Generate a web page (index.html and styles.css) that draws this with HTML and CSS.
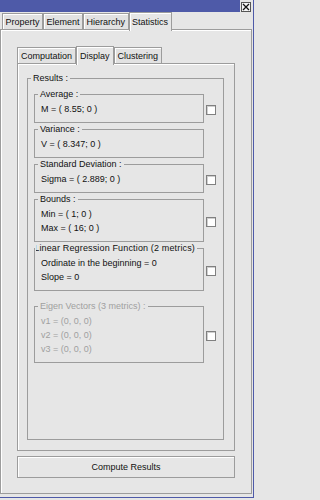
FILE: index.html
```html
<!DOCTYPE html>
<html>
<head>
<meta charset="utf-8">
<link rel="stylesheet" href="styles.css">
</head>
<body>
<div class="window">
  <div class="titlebar">
    <div class="title-fill"></div>
    <div class="close"><svg width="8" height="8" viewBox="0 0 8 8"><path d="M1 1L7 7M7 1L1 7" stroke="#111" stroke-width="1.3" fill="none"/></svg></div>
  </div>
  <div class="tabs top-tabs">
    <div class="tab">Property</div>
    <div class="tab">Element</div>
    <div class="tab">Hierarchy</div>
    <div class="tab tab-active">Statistics</div>
  </div>
  <div class="panel main-panel">
    <div class="tabs">
      <div class="tab">Computation</div>
      <div class="tab tab-active">Display</div>
      <div class="tab">Clustering</div>
    </div>
    <div class="panel inner-panel">
      <fieldset class="results">
        <legend>Results :</legend>
        <div class="results-body">
          <div class="row">
            <fieldset class="group"><legend>Average :</legend><div class="group-body">M = ( 8.55; 0 )</div></fieldset>
            <span class="check"></span>
          </div>
          <div class="row">
            <fieldset class="group"><legend>Variance :</legend><div class="group-body">V = ( 8.347; 0 )</div></fieldset>
          </div>
          <div class="row">
            <fieldset class="group"><legend>Standard Deviation :</legend><div class="group-body">Sigma = ( 2.889; 0 )</div></fieldset>
            <span class="check"></span>
          </div>
          <div class="row">
            <fieldset class="group"><legend>Bounds :</legend><div class="group-body">Min = ( 1; 0 )<br>Max = ( 16; 0 )</div></fieldset>
            <span class="check"></span>
          </div>
          <div class="row">
            <fieldset class="group"><legend class="legend-clipped"><span class="clip"><span class="clip-text">Linear Regression Function (2 metrics)</span></span></legend><div class="group-body">Ordinate in the beginning = 0<br>Slope = 0</div></fieldset>
            <span class="check"></span>
          </div>
          <div class="row row-gap">
            <fieldset class="group disabled"><legend>Eigen Vectors (3 metrics) :</legend><div class="group-body">v1 = (0, 0, 0)<br>v2 = (0, 0, 0)<br>v3 = (0, 0, 0)</div></fieldset>
            <span class="check"></span>
          </div>
        </div>
      </fieldset>
    </div>
    <button class="btn">Compute Results</button>
  </div>
</div>
</body>
</html>
```

FILE: styles.css
```css
html, body {
  margin: 0;
  padding: 0;
  background: #e6e6e6;
}
body {
  font-family: "Liberation Sans", Arial, sans-serif;
  font-size: 9px;
  color: #111;
  overflow: hidden;
}
.window {
  box-sizing: border-box;
  width: 254px;
  height: 498px;
  border-right: 1px solid #4e5aa8;
  border-bottom: 1px solid #4e5aa8;
  display: flex;
  flex-direction: column;
}
.titlebar {
  height: 12px;
  display: flex;
  flex: 0 0 12px;
}
.title-fill {
  width: 240px;
  background: #4e5aa8;
}
.close {
  box-sizing: border-box;
  width: 10px;
  height: 10px;
  margin: 2px 0 0 1px;
  border: 1px solid #555;
  background: #f4f4f4;
  display: flex;
  align-items: center;
  justify-content: center;
}
.close svg { display: block; }
.tabs {
  display: flex;
  align-items: flex-end;
  height: 17px;
  flex: 0 0 17px;
}
.top-tabs {
  padding-left: 2px;
}
.tab {
  box-sizing: border-box;
  height: 16px;
  padding: 1px 3px 0;
  line-height: 14px;
  border: 1px solid #9c9c9c;
  border-bottom: none;
  box-shadow: inset 1px 1px 0 #fff;
  background: #e2e2e2;
  white-space: nowrap;
}
.top-tabs .tab {
  padding-left: 2.5px;
  padding-right: 2.5px;
}
.tab-active {
  height: 19px;
  margin-bottom: -2px;
  padding-top: 2px;
  background: #e6e6e6;
  position: relative;
  z-index: 1;
}
.panel {
  box-sizing: border-box;
  border: 1px solid #9c9c9c;
  box-shadow: inset 1px 1px 0 #fff;
  background: #e6e6e6;
}
.main-panel {
  height: 465px;
  width: 252px;
  padding: 16px 16px 15px 16px;
  display: flex;
  flex-direction: column;
}
.inner-panel {
  height: 388px;
  flex: 0 0 388px;
  padding: 8px 10px 10px 9px;
  display: flex;
  flex-direction: column;
}
fieldset {
  margin: 0;
  padding: 0;
  border: 1px solid #9c9c9c;
  min-width: 0;
}
legend {
  padding: 0 2px;
  margin-left: 3px;
  line-height: 12px;
  white-space: nowrap;
}
.results {
  flex: 1;
}
.results-body {
  padding: 4px 7px 0 6px;
}
.row {
  display: flex;
  align-items: center;
}
.row-gap {
  margin-top: 9px;
}
.group {
  flex: 0 0 170px;
  width: 170px;
  box-sizing: border-box;
}
.group-body {
  padding: 2px 6px 6px 6px;
  line-height: 14px;
}
.legend-clipped {
  margin-left: 0;
  padding: 0 2px 0 1px;
}
.clip {
  display: flex;
  justify-content: flex-end;
  width: 159px;
  overflow: hidden;
}
.clip-text {
  flex: none;
  letter-spacing: 0.15px;
}
.disabled {
  color: #a0a0a0;
}
.check {
  box-sizing: border-box;
  width: 10px;
  height: 10px;
  margin: 9px 0 0 2px;
  border: 1px solid #808080;
  background: #fff;
  box-shadow: inset 1px 1px 0 #cfcfcf;
  flex: none;
}
.btn {
  box-sizing: border-box;
  margin: 5px 0 0 0;
  height: 22px;
  width: 100%;
  padding: 0;
  font: inherit;
  color: #111;
  border: 1px solid #9c9c9c;
  background: #e6e6e6;
  box-shadow: inset 1px 1px 0 #fff;
}
```
